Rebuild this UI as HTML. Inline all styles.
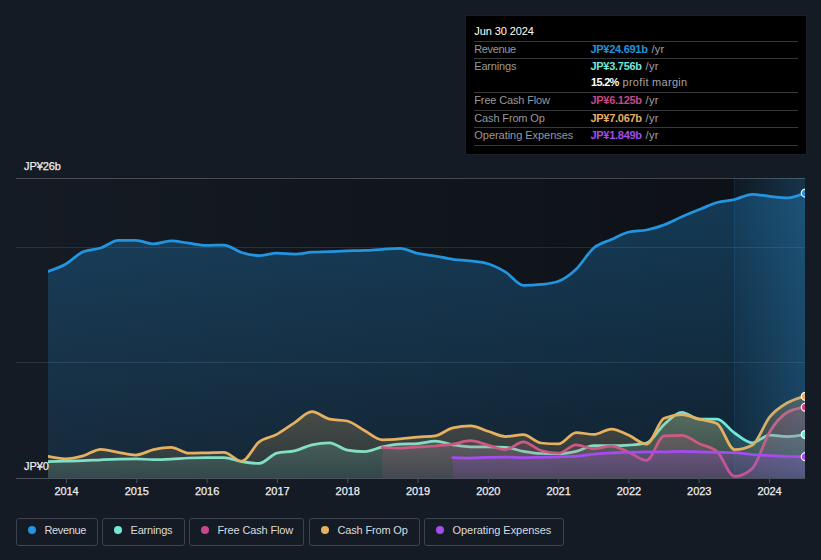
<!DOCTYPE html>
<html lang="en">
<head>
<meta charset="utf-8">
<title>Earnings and Revenue History</title>
<style>
html,body{margin:0;padding:0;background:#151b24;}
body{width:821px;height:560px;position:relative;overflow:hidden;font-family:"Liberation Sans",sans-serif;}
.chart{position:absolute;left:0;top:0;display:block}
.ax{font-family:"Liberation Sans",sans-serif;font-size:11px;fill:#eceef0;stroke:#eceef0;stroke-width:0.25px;letter-spacing:-0.08px}
.tt{position:absolute;left:466px;top:16px;width:340px;height:138px;background:#000;color:#fff;font-size:11px;box-shadow:0 0 0 1px #1a212c;}
.tth{position:absolute;left:8.3px;top:8px;height:17px;line-height:15px;color:#fff;font-size:11px;letter-spacing:-0.1px}
.row{position:absolute;left:8px;width:324px;height:17px;border-top:1px solid #37393d;box-sizing:border-box;line-height:14px;color:#97999d;white-space:nowrap}
.row.nob{border-top:none;line-height:14px;padding-top:1px}
.rl{position:absolute;left:0.3px;top:0}
.rv{position:absolute;left:116.4px;top:0;color:#a3a5a9}
.rv b{font-weight:bold;letter-spacing:-0.27px}
.rv b.pm{letter-spacing:-0.7px;margin-left:0.6px}
.rv i{font-style:normal;letter-spacing:0.3px;margin-left:3.8px}
.lastline{position:absolute;left:8px;width:324px;top:129px;height:0;border-top:1px solid #37393d}
.lg{position:absolute;top:518px;height:28px;box-sizing:border-box;border:1px solid #3c424e;border-radius:3px;color:#d9dbdf;font-size:11px;line-height:22px;white-space:nowrap}
.dot{position:absolute;left:11px;top:7px;width:8px;height:8px;border-radius:50%}
.lt{position:absolute;left:27.5px;top:0}
</style>
</head>
<body>
<svg class="chart" width="821" height="560" viewBox="0 0 821 560">
<defs>
<clipPath id="plotclip"><rect x="47.9" y="170" width="757.1" height="312"/></clipPath>
<linearGradient id="gPast" x1="0" y1="0" x2="1" y2="0"><stop offset="0" stop-color="#000" stop-opacity="0"/><stop offset="1" stop-color="#000" stop-opacity="0.36"/></linearGradient>
<linearGradient id="gHi" x1="0" y1="0" x2="1" y2="0"><stop offset="0" stop-color="#2a9be6" stop-opacity="0.04"/><stop offset="1" stop-color="#2a9be6" stop-opacity="0.11"/></linearGradient>
<linearGradient id="gHi2" x1="0" y1="0" x2="1" y2="0"><stop offset="0" stop-color="#3a9fe0" stop-opacity="0.02"/><stop offset="1" stop-color="#3a9fe0" stop-opacity="0.16"/></linearGradient>
<linearGradient id="g_rev" x1="0" y1="193" x2="0" y2="478" gradientUnits="userSpaceOnUse"><stop offset="0" stop-color="#2394df" stop-opacity="0.31"/><stop offset="1" stop-color="#2394df" stop-opacity="0.12"/></linearGradient>
<linearGradient id="g_ear" x1="0" y1="412" x2="0" y2="478" gradientUnits="userSpaceOnUse"><stop offset="0" stop-color="#71e7d6" stop-opacity="0.24"/><stop offset="1" stop-color="#71e7d6" stop-opacity="0.11"/></linearGradient>
<linearGradient id="g_fcf" x1="0" y1="407" x2="0" y2="478" gradientUnits="userSpaceOnUse"><stop offset="0" stop-color="#c6488a" stop-opacity="0.25"/><stop offset="1" stop-color="#c6488a" stop-opacity="0.12"/></linearGradient>
<linearGradient id="g_cfo" x1="0" y1="396" x2="0" y2="478" gradientUnits="userSpaceOnUse"><stop offset="0" stop-color="#e5b060" stop-opacity="0.28"/><stop offset="1" stop-color="#e5b060" stop-opacity="0.10"/></linearGradient>
<linearGradient id="g_opx" x1="0" y1="451" x2="0" y2="478" gradientUnits="userSpaceOnUse"><stop offset="0" stop-color="#a54cec" stop-opacity="0.24"/><stop offset="1" stop-color="#a54cec" stop-opacity="0.13"/></linearGradient>
</defs>
<rect x="16" y="178" width="718.5" height="300" fill="url(#gPast)"/>
<rect x="734.5" y="178" width="70.5" height="300" fill="#000" fill-opacity="0.36"/>
<rect x="734.5" y="178" width="70.5" height="300" fill="url(#gHi)"/>
<rect x="734" y="178" width="1" height="300" fill="#2a9be6" fill-opacity="0.12"/>
<line x1="16" x2="805" y1="178.5" y2="178.5" stroke="#fff" stroke-opacity="0.22" stroke-width="1"/>
<line x1="16" x2="805" y1="247.5" y2="247.5" stroke="#fff" stroke-opacity="0.10" stroke-width="1"/>
<line x1="16" x2="805" y1="362.5" y2="362.5" stroke="#fff" stroke-opacity="0.10" stroke-width="1"/>
<g clip-path="url(#plotclip)">
<path d="M47.90,271.40C53.77,269.43,59.64,267.47,65.51,264.20C71.38,260.93,77.25,254.33,83.11,251.80C88.98,249.27,94.85,249.92,100.72,248.00C106.59,246.08,112.46,240.30,118.33,240.30C124.20,240.30,130.07,240.30,135.94,240.30C141.80,240.30,147.67,243.90,153.54,243.90C159.41,243.90,165.28,240.90,171.15,240.90C177.02,240.90,182.89,242.45,188.76,243.20C194.62,243.95,200.49,245.40,206.36,245.40C212.23,245.40,218.10,245.00,223.97,245.00C229.84,245.00,235.71,250.73,241.58,252.50C247.45,254.27,253.31,255.60,259.18,255.60C265.05,255.60,270.92,253.20,276.79,253.20C282.66,253.20,288.53,254.00,294.40,254.00C300.27,254.00,306.14,252.60,312.00,252.20C317.87,251.80,323.74,251.82,329.61,251.60C335.48,251.38,341.35,251.10,347.22,250.90C353.09,250.70,358.96,250.67,364.83,250.40C370.69,250.13,376.56,249.63,382.43,249.30C388.30,248.97,394.17,248.40,400.04,248.40C405.91,248.40,411.78,252.12,417.65,253.40C423.52,254.68,429.38,255.12,435.25,256.10C441.12,257.08,446.99,258.50,452.86,259.30C458.73,260.10,464.60,260.15,470.47,260.90C476.34,261.65,482.21,261.92,488.07,263.80C493.94,265.68,499.81,268.62,505.68,272.20C511.55,275.78,517.42,285.30,523.29,285.30C529.16,285.30,535.03,285.00,540.90,284.40C546.76,283.80,552.63,283.33,558.50,281.20C564.37,279.07,570.24,274.73,576.11,269.20C581.98,263.67,587.85,252.95,593.72,248.00C599.59,243.05,605.45,242.17,611.32,239.50C617.19,236.83,623.06,233.33,628.93,232.00C634.80,230.67,640.67,231.18,646.54,230.00C652.41,228.82,658.28,227.10,664.14,224.90C670.01,222.70,675.88,219.35,681.75,216.80C687.62,214.25,693.49,211.98,699.36,209.60C705.23,207.22,711.10,204.18,716.97,202.50C722.84,200.82,728.70,200.87,734.57,199.50C740.44,198.13,746.31,194.30,752.18,194.30C758.05,194.30,763.92,195.80,769.79,196.40C775.66,197.00,781.52,197.90,787.39,197.90C793.26,197.90,799.13,195.50,805.00,193.10L805.00,478.00 L47.90,478.00 Z" fill="url(#g_rev)" stroke="none"/>
<path d="M47.90,271.40C53.77,269.43,59.64,267.47,65.51,264.20C71.38,260.93,77.25,254.33,83.11,251.80C88.98,249.27,94.85,249.92,100.72,248.00C106.59,246.08,112.46,240.30,118.33,240.30C124.20,240.30,130.07,240.30,135.94,240.30C141.80,240.30,147.67,243.90,153.54,243.90C159.41,243.90,165.28,240.90,171.15,240.90C177.02,240.90,182.89,242.45,188.76,243.20C194.62,243.95,200.49,245.40,206.36,245.40C212.23,245.40,218.10,245.00,223.97,245.00C229.84,245.00,235.71,250.73,241.58,252.50C247.45,254.27,253.31,255.60,259.18,255.60C265.05,255.60,270.92,253.20,276.79,253.20C282.66,253.20,288.53,254.00,294.40,254.00C300.27,254.00,306.14,252.60,312.00,252.20C317.87,251.80,323.74,251.82,329.61,251.60C335.48,251.38,341.35,251.10,347.22,250.90C353.09,250.70,358.96,250.67,364.83,250.40C370.69,250.13,376.56,249.63,382.43,249.30C388.30,248.97,394.17,248.40,400.04,248.40C405.91,248.40,411.78,252.12,417.65,253.40C423.52,254.68,429.38,255.12,435.25,256.10C441.12,257.08,446.99,258.50,452.86,259.30C458.73,260.10,464.60,260.15,470.47,260.90C476.34,261.65,482.21,261.92,488.07,263.80C493.94,265.68,499.81,268.62,505.68,272.20C511.55,275.78,517.42,285.30,523.29,285.30C529.16,285.30,535.03,285.00,540.90,284.40C546.76,283.80,552.63,283.33,558.50,281.20C564.37,279.07,570.24,274.73,576.11,269.20C581.98,263.67,587.85,252.95,593.72,248.00C599.59,243.05,605.45,242.17,611.32,239.50C617.19,236.83,623.06,233.33,628.93,232.00C634.80,230.67,640.67,231.18,646.54,230.00C652.41,228.82,658.28,227.10,664.14,224.90C670.01,222.70,675.88,219.35,681.75,216.80C687.62,214.25,693.49,211.98,699.36,209.60C705.23,207.22,711.10,204.18,716.97,202.50C722.84,200.82,728.70,200.87,734.57,199.50C740.44,198.13,746.31,194.30,752.18,194.30C758.05,194.30,763.92,195.80,769.79,196.40C775.66,197.00,781.52,197.90,787.39,197.90C793.26,197.90,799.13,195.50,805.00,193.10" fill="none" stroke="#2394df" stroke-width="2.75" stroke-linejoin="round" stroke-linecap="round"/>
<path d="M47.90,461.60C53.77,461.48,59.64,461.35,65.51,461.20C71.38,461.05,77.25,460.93,83.11,460.70C88.98,460.47,94.85,460.07,100.72,459.80C106.59,459.53,112.46,459.23,118.33,459.10C124.20,458.97,130.07,458.90,135.94,458.90C141.80,458.90,147.67,459.60,153.54,459.60C159.41,459.60,165.28,459.37,171.15,459.10C177.02,458.83,182.89,458.20,188.76,458.00C194.62,457.80,200.49,457.70,206.36,457.70C212.23,457.70,218.10,457.70,223.97,457.70C229.84,457.70,235.71,460.65,241.58,461.60C247.45,462.55,253.31,463.40,259.18,463.40C265.05,463.40,270.92,454.73,276.79,453.20C282.66,451.67,288.53,452.30,294.40,450.90C300.27,449.50,306.14,446.13,312.00,444.80C317.87,443.47,323.74,442.80,329.61,442.80C335.48,442.80,341.35,449.10,347.22,450.10C353.09,451.10,358.96,451.60,364.83,451.60C370.69,451.60,376.56,448.13,382.43,446.90C388.30,445.67,394.17,444.53,400.04,444.20C405.91,443.87,411.78,444.03,417.65,443.70C423.52,443.37,429.38,441.20,435.25,441.20C441.12,441.20,446.99,443.85,452.86,444.80C458.73,445.75,464.60,446.90,470.47,446.90C476.34,446.90,482.21,446.90,488.07,446.90C493.94,446.90,499.81,447.03,505.68,447.30C511.55,447.57,517.42,450.37,523.29,451.40C529.16,452.43,535.03,453.37,540.90,453.50C546.76,453.63,552.63,453.70,558.50,453.70C564.37,453.70,570.24,452.73,576.11,451.40C581.98,450.07,587.85,445.70,593.72,445.70C599.59,445.70,605.45,445.70,611.32,445.70C617.19,445.70,623.06,445.50,628.93,445.10C634.80,444.70,640.67,444.40,646.54,443.00C652.41,441.60,658.28,429.60,664.14,424.50C670.01,419.40,675.88,412.40,681.75,412.40C687.62,412.40,693.49,419.20,699.36,419.20C705.23,419.20,711.10,419.20,716.97,419.20C722.84,419.20,728.70,429.07,734.57,433.00C740.44,436.93,746.31,442.80,752.18,442.80C758.05,442.80,763.92,435.00,769.79,435.00C775.66,435.00,781.52,436.60,787.39,436.60C793.26,436.60,799.13,435.60,805.00,434.60L805.00,478.00 L47.90,478.00 Z" fill="url(#g_ear)" stroke="none"/>
<path d="M47.90,461.60C53.77,461.48,59.64,461.35,65.51,461.20C71.38,461.05,77.25,460.93,83.11,460.70C88.98,460.47,94.85,460.07,100.72,459.80C106.59,459.53,112.46,459.23,118.33,459.10C124.20,458.97,130.07,458.90,135.94,458.90C141.80,458.90,147.67,459.60,153.54,459.60C159.41,459.60,165.28,459.37,171.15,459.10C177.02,458.83,182.89,458.20,188.76,458.00C194.62,457.80,200.49,457.70,206.36,457.70C212.23,457.70,218.10,457.70,223.97,457.70C229.84,457.70,235.71,460.65,241.58,461.60C247.45,462.55,253.31,463.40,259.18,463.40C265.05,463.40,270.92,454.73,276.79,453.20C282.66,451.67,288.53,452.30,294.40,450.90C300.27,449.50,306.14,446.13,312.00,444.80C317.87,443.47,323.74,442.80,329.61,442.80C335.48,442.80,341.35,449.10,347.22,450.10C353.09,451.10,358.96,451.60,364.83,451.60C370.69,451.60,376.56,448.13,382.43,446.90C388.30,445.67,394.17,444.53,400.04,444.20C405.91,443.87,411.78,444.03,417.65,443.70C423.52,443.37,429.38,441.20,435.25,441.20C441.12,441.20,446.99,443.85,452.86,444.80C458.73,445.75,464.60,446.90,470.47,446.90C476.34,446.90,482.21,446.90,488.07,446.90C493.94,446.90,499.81,447.03,505.68,447.30C511.55,447.57,517.42,450.37,523.29,451.40C529.16,452.43,535.03,453.37,540.90,453.50C546.76,453.63,552.63,453.70,558.50,453.70C564.37,453.70,570.24,452.73,576.11,451.40C581.98,450.07,587.85,445.70,593.72,445.70C599.59,445.70,605.45,445.70,611.32,445.70C617.19,445.70,623.06,445.50,628.93,445.10C634.80,444.70,640.67,444.40,646.54,443.00C652.41,441.60,658.28,429.60,664.14,424.50C670.01,419.40,675.88,412.40,681.75,412.40C687.62,412.40,693.49,419.20,699.36,419.20C705.23,419.20,711.10,419.20,716.97,419.20C722.84,419.20,728.70,429.07,734.57,433.00C740.44,436.93,746.31,442.80,752.18,442.80C758.05,442.80,763.92,435.00,769.79,435.00C775.66,435.00,781.52,436.60,787.39,436.60C793.26,436.60,799.13,435.60,805.00,434.60" fill="none" stroke="#71e7d6" stroke-width="2.75" stroke-linejoin="round" stroke-linecap="round"/>
<path d="M382.43,447.50C388.30,447.85,394.17,448.20,400.04,448.20C405.91,448.20,411.78,447.27,417.65,446.90C423.52,446.53,429.38,446.45,435.25,446.00C441.12,445.55,446.99,445.08,452.86,444.20C458.73,443.32,464.60,440.70,470.47,440.70C476.34,440.70,482.21,443.62,488.07,445.10C493.94,446.58,499.81,449.60,505.68,449.60C511.55,449.60,517.42,441.90,523.29,441.90C529.16,441.90,535.03,448.70,540.90,450.50C546.76,452.30,552.63,453.20,558.50,453.20C564.37,453.20,570.24,444.80,576.11,444.80C581.98,444.80,587.85,448.70,593.72,448.70C599.59,448.70,605.45,446.00,611.32,446.00C617.19,446.00,623.06,449.90,628.93,452.30C634.80,454.70,640.67,460.40,646.54,460.40C652.41,460.40,658.28,436.13,664.14,435.80C670.01,435.47,675.88,435.30,681.75,435.30C687.62,435.30,693.49,441.02,699.36,443.70C705.23,446.38,711.10,446.27,716.97,451.40C722.84,456.53,728.70,476.40,734.57,476.40C740.44,476.40,746.31,473.80,752.18,468.60C758.05,463.40,763.92,441.08,769.79,431.70C775.66,422.32,781.52,415.70,787.39,412.30C793.26,408.90,799.13,408.05,805.00,407.20L805.00,478.00 L382.43,478.00 Z" fill="url(#g_fcf)" stroke="none"/>
<path d="M382.43,447.50C388.30,447.85,394.17,448.20,400.04,448.20C405.91,448.20,411.78,447.27,417.65,446.90C423.52,446.53,429.38,446.45,435.25,446.00C441.12,445.55,446.99,445.08,452.86,444.20C458.73,443.32,464.60,440.70,470.47,440.70C476.34,440.70,482.21,443.62,488.07,445.10C493.94,446.58,499.81,449.60,505.68,449.60C511.55,449.60,517.42,441.90,523.29,441.90C529.16,441.90,535.03,448.70,540.90,450.50C546.76,452.30,552.63,453.20,558.50,453.20C564.37,453.20,570.24,444.80,576.11,444.80C581.98,444.80,587.85,448.70,593.72,448.70C599.59,448.70,605.45,446.00,611.32,446.00C617.19,446.00,623.06,449.90,628.93,452.30C634.80,454.70,640.67,460.40,646.54,460.40C652.41,460.40,658.28,436.13,664.14,435.80C670.01,435.47,675.88,435.30,681.75,435.30C687.62,435.30,693.49,441.02,699.36,443.70C705.23,446.38,711.10,446.27,716.97,451.40C722.84,456.53,728.70,476.40,734.57,476.40C740.44,476.40,746.31,473.80,752.18,468.60C758.05,463.40,763.92,441.08,769.79,431.70C775.66,422.32,781.52,415.70,787.39,412.30C793.26,408.90,799.13,408.05,805.00,407.20" fill="none" stroke="#c6488a" stroke-width="2.75" stroke-linejoin="round" stroke-linecap="round"/>
<path d="M47.90,456.40C53.77,457.65,59.64,458.90,65.51,458.90C71.38,458.90,77.25,457.50,83.11,455.90C88.98,454.30,94.85,449.30,100.72,449.30C106.59,449.30,112.46,451.35,118.33,452.30C124.20,453.25,130.07,455.00,135.94,455.00C141.80,455.00,147.67,450.88,153.54,449.60C159.41,448.32,165.28,447.30,171.15,447.30C177.02,447.30,182.89,453.20,188.76,453.20C194.62,453.20,200.49,452.95,206.36,452.80C212.23,452.65,218.10,452.30,223.97,452.30C229.84,452.30,235.71,461.20,241.58,461.20C247.45,461.20,253.31,446.37,259.18,441.90C265.05,437.43,270.92,437.58,276.79,434.40C282.66,431.22,288.53,426.58,294.40,422.80C300.27,419.02,306.14,411.70,312.00,411.70C317.87,411.70,323.74,418.00,329.61,419.20C335.48,420.40,341.35,419.80,347.22,421.00C353.09,422.20,358.96,427.67,364.83,430.80C370.69,433.93,376.56,439.80,382.43,439.80C388.30,439.80,394.17,439.35,400.04,438.90C405.91,438.45,411.78,437.62,417.65,437.10C423.52,436.58,429.38,436.67,435.25,435.80C441.12,434.93,446.99,429.13,452.86,427.80C458.73,426.47,464.60,425.80,470.47,425.80C476.34,425.80,482.21,429.52,488.07,431.30C493.94,433.08,499.81,436.50,505.68,436.50C511.55,436.50,517.42,434.70,523.29,434.70C529.16,434.70,535.03,442.40,540.90,443.00C546.76,443.60,552.63,443.90,558.50,443.90C564.37,443.90,570.24,432.60,576.11,432.60C581.98,432.60,587.85,434.40,593.72,434.40C599.59,434.40,605.45,429.00,611.32,429.00C617.19,429.00,623.06,432.77,628.93,435.30C634.80,437.83,640.67,444.20,646.54,444.20C652.41,444.20,658.28,420.70,664.14,418.30C670.01,415.90,675.88,414.70,681.75,414.70C687.62,414.70,693.49,417.72,699.36,419.20C705.23,420.68,711.10,420.67,716.97,423.60C722.84,426.53,728.70,449.60,734.57,449.60C740.44,449.60,746.31,448.13,752.18,445.20C758.05,442.27,763.92,423.97,769.79,416.90C775.66,409.83,781.52,406.23,787.39,402.80C793.26,399.37,799.13,397.83,805.00,396.30L805.00,478.00 L47.90,478.00 Z" fill="url(#g_cfo)" stroke="none"/>
<path d="M47.90,456.40C53.77,457.65,59.64,458.90,65.51,458.90C71.38,458.90,77.25,457.50,83.11,455.90C88.98,454.30,94.85,449.30,100.72,449.30C106.59,449.30,112.46,451.35,118.33,452.30C124.20,453.25,130.07,455.00,135.94,455.00C141.80,455.00,147.67,450.88,153.54,449.60C159.41,448.32,165.28,447.30,171.15,447.30C177.02,447.30,182.89,453.20,188.76,453.20C194.62,453.20,200.49,452.95,206.36,452.80C212.23,452.65,218.10,452.30,223.97,452.30C229.84,452.30,235.71,461.20,241.58,461.20C247.45,461.20,253.31,446.37,259.18,441.90C265.05,437.43,270.92,437.58,276.79,434.40C282.66,431.22,288.53,426.58,294.40,422.80C300.27,419.02,306.14,411.70,312.00,411.70C317.87,411.70,323.74,418.00,329.61,419.20C335.48,420.40,341.35,419.80,347.22,421.00C353.09,422.20,358.96,427.67,364.83,430.80C370.69,433.93,376.56,439.80,382.43,439.80C388.30,439.80,394.17,439.35,400.04,438.90C405.91,438.45,411.78,437.62,417.65,437.10C423.52,436.58,429.38,436.67,435.25,435.80C441.12,434.93,446.99,429.13,452.86,427.80C458.73,426.47,464.60,425.80,470.47,425.80C476.34,425.80,482.21,429.52,488.07,431.30C493.94,433.08,499.81,436.50,505.68,436.50C511.55,436.50,517.42,434.70,523.29,434.70C529.16,434.70,535.03,442.40,540.90,443.00C546.76,443.60,552.63,443.90,558.50,443.90C564.37,443.90,570.24,432.60,576.11,432.60C581.98,432.60,587.85,434.40,593.72,434.40C599.59,434.40,605.45,429.00,611.32,429.00C617.19,429.00,623.06,432.77,628.93,435.30C634.80,437.83,640.67,444.20,646.54,444.20C652.41,444.20,658.28,420.70,664.14,418.30C670.01,415.90,675.88,414.70,681.75,414.70C687.62,414.70,693.49,417.72,699.36,419.20C705.23,420.68,711.10,420.67,716.97,423.60C722.84,426.53,728.70,449.60,734.57,449.60C740.44,449.60,746.31,448.13,752.18,445.20C758.05,442.27,763.92,423.97,769.79,416.90C775.66,409.83,781.52,406.23,787.39,402.80C793.26,399.37,799.13,397.83,805.00,396.30" fill="none" stroke="#e5b060" stroke-width="2.75" stroke-linejoin="round" stroke-linecap="round"/>
<rect x="734.5" y="178" width="70.5" height="300" fill="url(#gHi2)"/>
<path d="M452.86,457.70C458.73,457.85,464.60,458.00,470.47,458.00C476.34,458.00,482.21,457.43,488.07,457.30C493.94,457.17,499.81,457.10,505.68,457.10C511.55,457.10,517.42,457.70,523.29,457.70C529.16,457.70,535.03,457.45,540.90,457.30C546.76,457.15,552.63,456.98,558.50,456.80C564.37,456.62,570.24,456.60,576.11,456.20C581.98,455.80,587.85,454.67,593.72,454.10C599.59,453.53,605.45,453.10,611.32,452.80C617.19,452.50,623.06,452.45,628.93,452.30C634.80,452.15,640.67,451.97,646.54,451.90C652.41,451.83,658.28,451.87,664.14,451.80C670.01,451.73,675.88,451.40,681.75,451.40C687.62,451.40,693.49,451.65,699.36,451.80C705.23,451.95,711.10,452.15,716.97,452.30C722.84,452.45,728.70,452.43,734.57,452.70C740.44,452.97,746.31,454.00,752.18,454.50C758.05,455.00,763.92,455.37,769.79,455.70C775.66,456.03,781.52,456.37,787.39,456.50C793.26,456.63,799.13,456.67,805.00,456.70L805.00,478.00 L452.86,478.00 Z" fill="url(#g_opx)" stroke="none"/>
<path d="M452.86,457.70C458.73,457.85,464.60,458.00,470.47,458.00C476.34,458.00,482.21,457.43,488.07,457.30C493.94,457.17,499.81,457.10,505.68,457.10C511.55,457.10,517.42,457.70,523.29,457.70C529.16,457.70,535.03,457.45,540.90,457.30C546.76,457.15,552.63,456.98,558.50,456.80C564.37,456.62,570.24,456.60,576.11,456.20C581.98,455.80,587.85,454.67,593.72,454.10C599.59,453.53,605.45,453.10,611.32,452.80C617.19,452.50,623.06,452.45,628.93,452.30C634.80,452.15,640.67,451.97,646.54,451.90C652.41,451.83,658.28,451.87,664.14,451.80C670.01,451.73,675.88,451.40,681.75,451.40C687.62,451.40,693.49,451.65,699.36,451.80C705.23,451.95,711.10,452.15,716.97,452.30C722.84,452.45,728.70,452.43,734.57,452.70C740.44,452.97,746.31,454.00,752.18,454.50C758.05,455.00,763.92,455.37,769.79,455.70C775.66,456.03,781.52,456.37,787.39,456.50C793.26,456.63,799.13,456.67,805.00,456.70" fill="none" stroke="#a54cec" stroke-width="2.75" stroke-linejoin="round" stroke-linecap="round"/>
<circle cx="805.3" cy="193.1" r="4" fill="#2394df" stroke="#fff" stroke-width="1.2"/>
<circle cx="805.3" cy="434.6" r="4" fill="#71e7d6" stroke="#fff" stroke-width="1.2"/>
<circle cx="805.3" cy="407.2" r="4" fill="#c6488a" stroke="#fff" stroke-width="1.2"/>
<circle cx="805.3" cy="396.3" r="4" fill="#e5b060" stroke="#fff" stroke-width="1.2"/>
<circle cx="805.3" cy="456.7" r="4" fill="#a54cec" stroke="#fff" stroke-width="1.2"/>
</g>
<line x1="16" x2="805" y1="478.5" y2="478.5" stroke="#4a505c" stroke-width="1"/>
<line x1="66.5" x2="66.5" y1="479" y2="483" stroke="#4a505c" stroke-width="1"/>
<text x="66.5" y="495" text-anchor="middle" class="ax">2014</text>
<line x1="136.8" x2="136.8" y1="479" y2="483" stroke="#4a505c" stroke-width="1"/>
<text x="136.8" y="495" text-anchor="middle" class="ax">2015</text>
<line x1="207.1" x2="207.1" y1="479" y2="483" stroke="#4a505c" stroke-width="1"/>
<text x="207.1" y="495" text-anchor="middle" class="ax">2016</text>
<line x1="277.4" x2="277.4" y1="479" y2="483" stroke="#4a505c" stroke-width="1"/>
<text x="277.4" y="495" text-anchor="middle" class="ax">2017</text>
<line x1="347.7" x2="347.7" y1="479" y2="483" stroke="#4a505c" stroke-width="1"/>
<text x="347.7" y="495" text-anchor="middle" class="ax">2018</text>
<line x1="418.0" x2="418.0" y1="479" y2="483" stroke="#4a505c" stroke-width="1"/>
<text x="418.0" y="495" text-anchor="middle" class="ax">2019</text>
<line x1="488.3" x2="488.3" y1="479" y2="483" stroke="#4a505c" stroke-width="1"/>
<text x="488.3" y="495" text-anchor="middle" class="ax">2020</text>
<line x1="558.6" x2="558.6" y1="479" y2="483" stroke="#4a505c" stroke-width="1"/>
<text x="558.6" y="495" text-anchor="middle" class="ax">2021</text>
<line x1="628.9" x2="628.9" y1="479" y2="483" stroke="#4a505c" stroke-width="1"/>
<text x="628.9" y="495" text-anchor="middle" class="ax">2022</text>
<line x1="699.2" x2="699.2" y1="479" y2="483" stroke="#4a505c" stroke-width="1"/>
<text x="699.2" y="495" text-anchor="middle" class="ax">2023</text>
<line x1="769.5" x2="769.5" y1="479" y2="483" stroke="#4a505c" stroke-width="1"/>
<text x="769.5" y="495" text-anchor="middle" class="ax">2024</text>
<text x="24" y="170.3" class="ax">JP¥26b</text>
<text x="24" y="470.3" class="ax">JP¥0</text>
</svg>
<div class="tt">
<div class="tth">Jun 30 2024</div>
<div class="row" style="top:25.0px"><span class="rl" style="letter-spacing:-0.38px">Revenue</span><span class="rv"><b style="color:#2394df">JP¥24.691b</b><i>/yr</i></span></div>
<div class="row" style="top:42.0px"><span class="rl" style="letter-spacing:-0.19px">Earnings</span><span class="rv"><b style="color:#71e7d6">JP¥3.756b</b><i>/yr</i></span></div>
<div class="row" style="top:76.0px"><span class="rl" style="letter-spacing:-0.15px">Free Cash Flow</span><span class="rv"><b style="color:#c6488a">JP¥6.125b</b><i>/yr</i></span></div>
<div class="row" style="top:94.0px"><span class="rl" style="letter-spacing:-0.145px">Cash From Op</span><span class="rv"><b style="color:#e5b060">JP¥7.067b</b><i>/yr</i></span></div>
<div class="row" style="top:111.0px"><span class="rl" style="letter-spacing:-0.04px">Operating Expenses</span><span class="rv"><b style="color:#a54cec">JP¥1.849b</b><i>/yr</i></span></div>
<div class="row nob" style="top:59.0px"><span class="rv"><b class="pm" style="color:#fff">15.2%</b><i>profit margin</i></span></div>
<div class="lastline"></div>
</div>
<div class="lg" style="left:16px;width:82px"><span class="dot" style="background:#2394df"></span><span class="lt" style="letter-spacing:-0.38px">Revenue</span></div>
<div class="lg" style="left:102px;width:82.5px"><span class="dot" style="background:#71e7d6"></span><span class="lt" style="letter-spacing:-0.19px">Earnings</span></div>
<div class="lg" style="left:189px;width:115px"><span class="dot" style="background:#c6488a"></span><span class="lt" style="letter-spacing:-0.15px">Free Cash Flow</span></div>
<div class="lg" style="left:309px;width:111px"><span class="dot" style="background:#e5b060"></span><span class="lt" style="letter-spacing:-0.16px">Cash From Op</span></div>
<div class="lg" style="left:424px;width:140px"><span class="dot" style="background:#a54cec"></span><span class="lt" style="letter-spacing:-0.05px">Operating Expenses</span></div>
</body>
</html>
